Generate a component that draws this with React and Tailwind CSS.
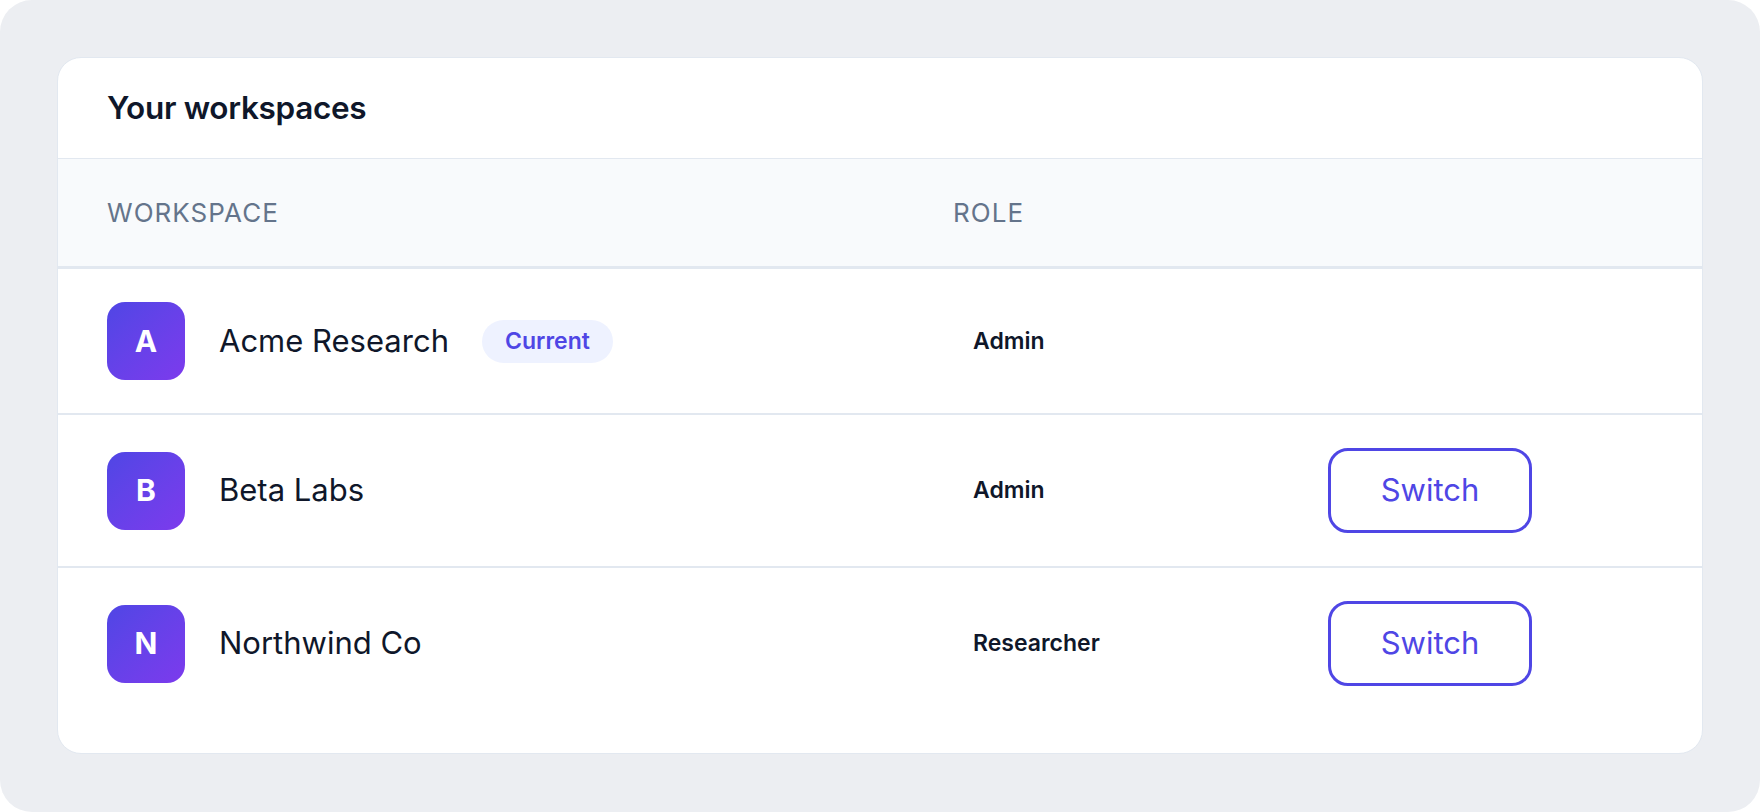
import React from "react";

const rows = [
  { letter: "A", name: "Acme Research", role: "Admin", current: true },
  { letter: "B", name: "Beta Labs", role: "Admin" },
  { letter: "N", name: "Northwind Co", role: "Researcher" },
];

export default function App() {
  return (
    <div
      className="w-[1760px] h-[812px] bg-[#eceef2] rounded-[32px] p-[57px] pb-[58px]"
      style={{ fontFamily: "Inter, 'Noto Sans', sans-serif" }}
    >
      <div className="h-full bg-white border border-[#e2e8f0] rounded-[24px] overflow-hidden flex flex-col">
        <div className="h-[101px] border-b border-[#e2e8f0] flex items-center px-[49px]">
          <h1 className="text-[31.5px] font-semibold text-[#0f172a] tracking-[-0.01em]">Your workspaces</h1>
        </div>
        <div className="h-[110px] bg-[#f8fafc] border-b-[3px] border-[#e2e8f0] grid grid-cols-[846px_375px_1fr] items-center pl-[49px] text-[26px] text-[#64748b] tracking-[0.04em]">
          <div>WORKSPACE</div>
          <div>ROLE</div>
          <div></div>
        </div>
        {rows.map((r, i) => (
          <div
            key={r.name}
            className={`grid grid-cols-[846px_375px_1fr] items-center pl-[49px] py-[33px] ${i < rows.length - 1 ? "border-b-2 border-[#e2e8f0]" : ""}`}
          >
            <div className="flex items-center">
              <div className="w-[78px] h-[78px] rounded-[18px] bg-gradient-to-br from-[#4f46e5] to-[#7c3aed] flex items-center justify-center text-white text-[30px] font-bold">
                {r.letter}
              </div>
              <span className="ml-[34px] text-[31px] text-[#0f172a]">{r.name}</span>
              {r.current && (
                <span className="ml-[33px] h-[43px] w-[131px] justify-center rounded-full bg-[#eef2ff] text-[#4f46e5] text-[23px] font-semibold flex items-center">
                  Current
                </span>
              )}
            </div>
            <div className="pl-[20px] text-[23px] font-semibold text-[#0f172a]">{r.role}</div>
            <div>
              {!r.current && (
                <button className="w-[204px] h-[85px] border-[3px] border-[#4f46e5] rounded-[20px] text-[31px] text-[#4f46e5] bg-white">
                  Switch
                </button>
              )}
            </div>
          </div>
        ))}
      </div>
    </div>
  );
}
